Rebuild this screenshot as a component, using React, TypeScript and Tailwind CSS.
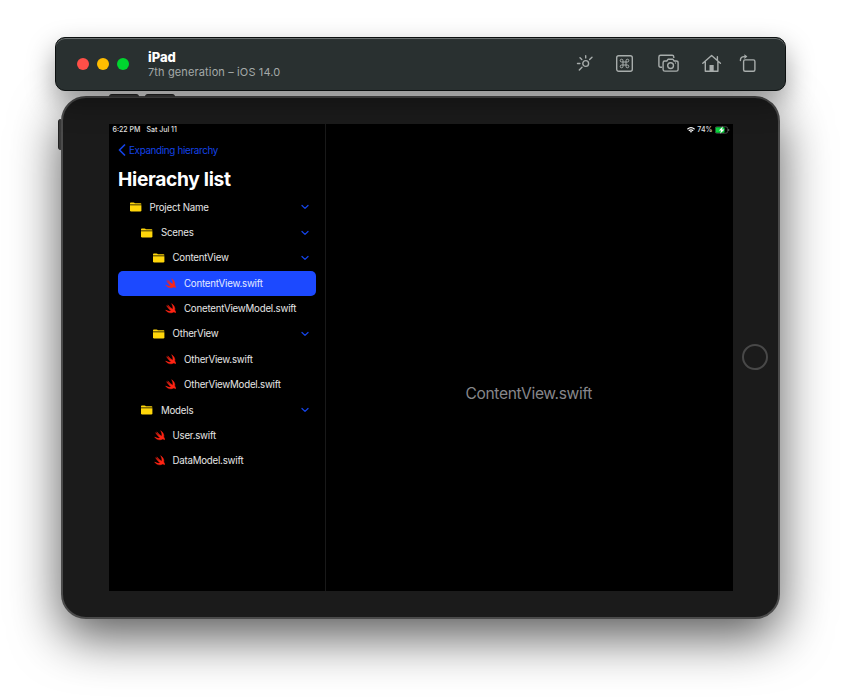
import React from "react";

type Node = { name: string; level: number; kind: "folder" | "swift"; selected?: boolean };

const nodes: Node[] = [
  { name: "Project Name", level: 0, kind: "folder" },
  { name: "Scenes", level: 1, kind: "folder" },
  { name: "ContentView", level: 2, kind: "folder" },
  { name: "ContentView.swift", level: 3, kind: "swift", selected: true },
  { name: "ConetentViewModel.swift", level: 3, kind: "swift" },
  { name: "OtherView", level: 2, kind: "folder" },
  { name: "OtherView.swift", level: 3, kind: "swift" },
  { name: "OtherViewModel.swift", level: 3, kind: "swift" },
  { name: "Models", level: 1, kind: "folder" },
  { name: "User.swift", level: 2, kind: "swift" },
  { name: "DataModel.swift", level: 2, kind: "swift" },
];

const indents = ["pl-[11.5px]", "pl-[23px]", "pl-[34.5px]", "pl-[46px]"];

function FolderIcon() {
  return (
    <svg className="w-3 h-[10px] shrink-0" viewBox="0 0 12 10" fill="#ffd60a">
      <path d="M0 2.500V1.400Q0 .5.9.5h2.600q.5 0 .8.3l.6.4h5.500q1 0 1 1v.3z" />
      <path d="M0 3.200h11.400v5q0 1.200-1.200 1.200H1.200Q0 9.400 0 8.200z" />
    </svg>
  );
}

function SwiftIcon() {
  return (
    <svg className="h-[11px] w-3 shrink-0" viewBox="-2.500 1.500 25 22" fill="#ff2414">
      <path d="M13.500 2.500c5 3.300 7.700 8.700 6.300 13.300 2.500 3.100 2.200 5.800 1.700 6.200-1.500-2.400-3.600-2.200-5.200-1.500-5.300 2.500-11.800.5-15.300-4.700 4.200 2.600 8.200 3 11.600 1.600C8.500 14.300 5.200 10.400 3 6.800c3.100 3 6.600 5.500 8.300 6.600C9 11 6.700 8 5.200 5.200c3.500 3.600 7 6.700 10.600 9 .9-3.800-.1-8-2.300-11.700z" stroke="#ff2414" strokeWidth="1" />
    </svg>
  );
}

function Row({ node }: { node: Node }) {
  return (
    <div
      className={`flex h-[25.36px] items-center rounded-[5px] pr-[7px] text-[9.7px] tracking-[-0.22px] ${indents[node.level]} ${
        node.selected ? "bg-[#1c49ff] text-[#e3e9ff]" : "text-[#e6e6e6]"
      }`}
    >
      {node.kind === "folder" ? <FolderIcon /> : <SwiftIcon />}
      <span className="ml-2 whitespace-nowrap pt-[1.4px]">{node.name}</span>
      {node.kind === "folder" && (
        <svg className="ml-auto h-2 w-2" viewBox="0 0 8 8" fill="none" stroke="#1443e6" strokeWidth="1.3" strokeLinecap="round" strokeLinejoin="round">
          <path d="M1 2.500l3 2.900 3-2.900" />
        </svg>
      )}
    </div>
  );
}

function Toolbar() {
  return (
    <div className="flex items-center text-[#a8adac]">
      <svg className="h-5 w-5" viewBox="0 0 20 20" fill="none" stroke="currentColor" strokeWidth="1.4" strokeLinecap="round">
        <circle cx="10.700" cy="10.500" r="2.900" />
        <path d="M10.700 2.700v2.200M5 4.700l1.800 1.800M17 4.200l-2.400 2.400M2.500 10.500h2.400M7 14.200l-2.700 2.800" />
      </svg>
      <svg className="ml-5 h-5 w-5" viewBox="0 0 20 20" fill="none" stroke="currentColor">
        <rect x="1.700" y="2.700" width="15.600" height="15.600" rx="2" strokeWidth="1.400" />
        <path strokeWidth="1" d="M8 9h3v3H8zM8 9H6.700A1.400 1.400 0 1 1 8 7.600zM11 9V7.600A1.400 1.400 0 1 1 12.300 9zM11 12h1.300a1.400 1.400 0 1 1-1.300 1.400zM8 12v1.400A1.400 1.400 0 1 1 6.700 12z" />
      </svg>
      <svg className="ml-[23px] h-5 w-[22px]" viewBox="0.400 0 22 20" fill="none" stroke="currentColor" strokeWidth="1.400" strokeLinejoin="round">
        <path d="M4.500 14.200H3q-1.700 0-1.700-1.700V4Q1.300 2.300 3 2.300h11.500q1.700 0 1.700 1.700v1" />
        <path d="M7.200 8h2l1.200-1.700h5L16.600 8h2q1.900 0 1.900 1.700v6.700q0 1.700-1.700 1.700H7.200q-1.700 0-1.700-1.700V9.700Q5.500 8 7.200 8z" />
        <circle cx="13" cy="12.600" r="2.900" />
        <path d="M17.600 10h.8" />
      </svg>
      <svg className="ml-[22px] h-5 w-5" viewBox="0.400 0 20 20" fill="none" stroke="currentColor" strokeWidth="1.400" strokeLinejoin="round" strokeLinecap="round">
        <path d="M1.200 10.300L10 2.500l8.800 7.800M15.800 3.700v3.700M3.700 9v9.200h12.600V9" />
        <path d="M7.900 12h4.200v6.200H7.900z" fill="currentColor" stroke="none" />
      </svg>
      <svg className="ml-[17px] h-5 w-5" viewBox="0.400 0 20 20" fill="none" stroke="currentColor" strokeWidth="1.400" strokeLinejoin="round" strokeLinecap="round">
        <rect x="5" y="6.900" width="11.300" height="11.300" rx="1.500" />
        <path d="M1.800 7.500q0-3.900 4-3.900" />
        <path d="M5.800 1.300l3 2.300-3 2.300z" fill="currentColor" stroke="none" />
      </svg>
    </div>
  );
}

export default function App() {
  return (
    <div className="flex h-[698px] w-[841px] flex-col overflow-hidden bg-white pt-[37px] font-['Inter',sans-serif]">
      <header className="relative z-10 ml-[55px] flex h-[54px] w-[731px] items-center rounded-[10px] border border-[#0c1010] bg-[#293030] pl-[21px] pr-[26.5px] shadow-[inset_0_1px_0_#6b7070,0_12px_28px_rgba(0,0,0,0.38)]">
        <div className="flex gap-2">
          <i className="h-3 w-3 rounded-full bg-[#ff4f48]" />
          <i className="h-3 w-3 rounded-full bg-[#ffbd00]" />
          <i className="h-3 w-3 rounded-full bg-[#00d52f]" />
        </div>
        <div className="ml-[19px]">
          <div className="text-[13px] font-extrabold leading-[15px] text-white">iPad</div>
          <div className="text-[11px] leading-[14px] tracking-[0.13px] text-[#a4a9a8]">7th generation – iOS 14.0</div>
        </div>
        <div className="mb-[2px] ml-auto">
          <Toolbar />
        </div>
      </header>

      <main className="relative ml-[61px] mt-[5px] h-[523px] w-[719px] rounded-[25px] border-2 border-[#4b4b4b] bg-[#1b1b1b] pl-[45.5px] pt-[26px] shadow-[0_18px_50px_rgba(0,0,0,0.65)]">
        <i className="absolute -top-[4px] left-[46px] h-[3px] w-[30px] rounded-t-sm border-t border-[#222] bg-[#3a3a3a]" />
        <i className="absolute -top-[4px] left-[82px] h-[3px] w-[30px] rounded-t-sm border-t border-[#222] bg-[#3a3a3a]" />
        <i className="absolute -left-[5px] top-[21px] h-[31px] w-[3px] rounded-l-sm border-l border-[#222] bg-[#3a3a3a]" />
        <i className="absolute right-[10px] top-[246px] h-[26px] w-[26px] rounded-full border-2 border-[#484848]" />
        <div className="flex h-[467px] w-[624px] bg-black">
          <aside className="h-full w-[217.5px] border-r border-[#191919] pl-[9.5px] pr-[9px]">
            <div className="-ml-[5.5px] flex h-[12px] items-center gap-[6px] text-[7px] font-medium text-[#e0e0e0]">
              <span>6:22 PM</span>
              <span>Sat Jul 11</span>
            </div>
            <div className="flex h-[28px] items-center text-[9.9px] tracking-[-0.35px] text-[#1443e6]">
              <svg className="mr-[3px] h-3 w-2" viewBox="0 0 8 12" fill="none" stroke="currentColor" strokeWidth="1.700" strokeLinecap="round" strokeLinejoin="round">
                <path d="M6.500 1L1.500 6l5 5" />
              </svg>
              Expanding hierarchy
            </div>
            <h1 className="h-[30.600px] pt-[1.500px] text-[19.2px] font-bold leading-[27px] tracking-[-0.32px] text-white">Hierachy list</h1>
            <div>
              {nodes.map((n) => (
                <Row key={n.name} node={n} />
              ))}
            </div>
          </aside>
          <section className="flex flex-1 flex-col">
            <div className="flex h-[12px] items-center justify-end pr-[3px] text-[7px] font-medium text-[#e0e0e0]">
              <svg className="mr-[2px] h-[6px] w-[8px]" viewBox="0 0 8 6" fill="none" stroke="#fff" strokeWidth="1.200">
                <path d="M.4 2.200q3.600-3 7.200 0M1.800 3.700q2.200-1.800 4.400 0" />
                <path d="M2.900 4.500q1.100-.8 2.200 0L4 5.800z" fill="#fff" stroke="none" />
              </svg>
              <span>74%</span>
              <svg className="ml-[2px] h-[8px] w-[15px]" viewBox="0.500 0 15 8">
                <rect x=".5" y=".8" width="12.700" height="6.400" rx="1.800" fill="none" stroke="#666" strokeWidth=".7" />
                <rect x="1.100" y="1.300" width="8.900" height="5.400" rx="1" fill="#0bd23e" />
                <path d="M8.400.3L4.400 4.500h2.200L5.600 7.700l4.400-4.300H7.500z" fill="#fff" />
                <path d="M14.200 3v2" stroke="#666" />
              </svg>
            </div>
            <div className="flex flex-1 items-center justify-center pr-[1px] pt-[60px] text-[15.6px] tracking-[-0.36px] text-[#86868a]">ContentView.swift</div>
          </section>
        </div>
      </main>
    </div>
  );
}
